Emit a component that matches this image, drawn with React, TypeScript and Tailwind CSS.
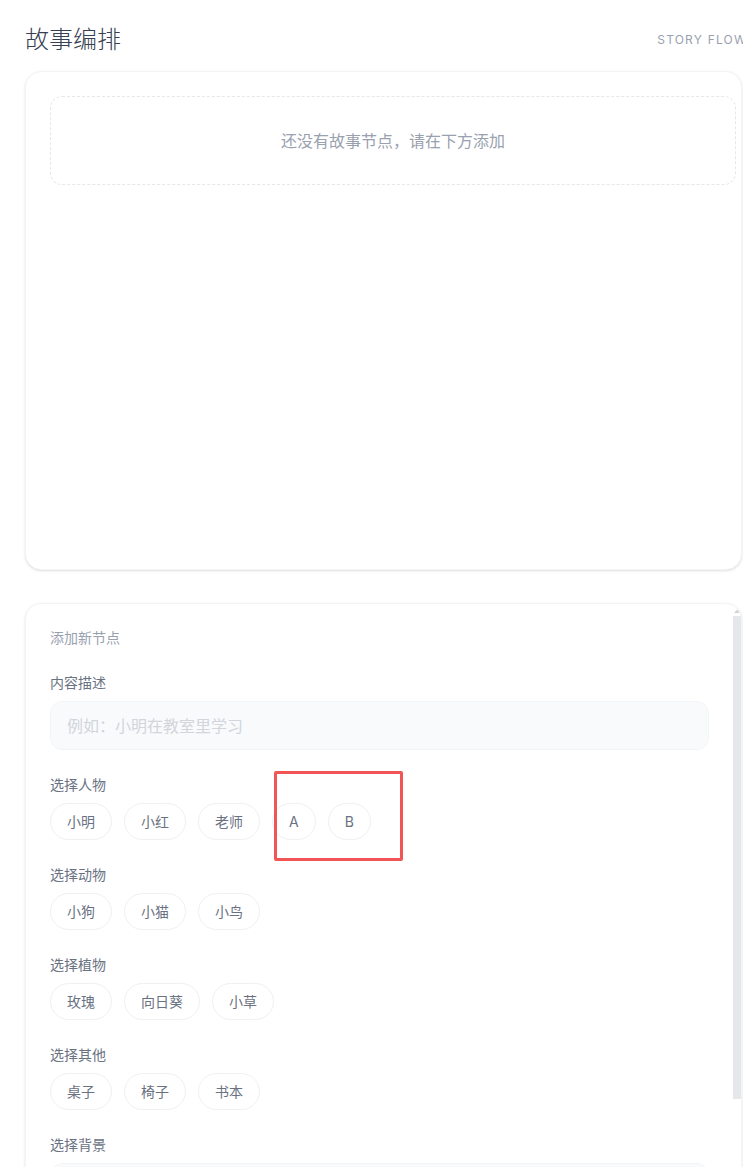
const people = ["小明", "小红", "老师", "A", "B"];
const animals = ["小狗", "小猫", "小鸟"];
const plants = ["玫瑰", "向日葵", "小草"];
const others = ["桌子", "椅子", "书本"];

function Chip({ label }: { label: string }) {
  return (
    <button className="h-[37px] px-4 rounded-full border border-[#eef0f3] bg-white text-sm text-gray-500 flex items-center">
      {label}
    </button>
  );
}

function ChipGroup({ title, items }: { title: string; items: string[] }) {
  return (
    <div>
      <div className="text-sm leading-5 text-gray-500 mb-2">{title}</div>
      <div className="flex flex-wrap gap-3">
        {items.map((item) => (
          <Chip key={item} label={item} />
        ))}
      </div>
    </div>
  );
}

export default function App() {
  return (
    <div
      className="relative w-full min-h-[1167px] overflow-hidden bg-white"
      style={{ fontFamily: 'Inter, "Noto Sans CJK SC", sans-serif' }}
    >
      <div className="ml-[25px] w-[722px] pt-6">
        <div className="flex items-center justify-between h-8">
          <h1 className="text-2xl text-gray-700 font-light">故事编排</h1>
          <span className="text-xs tracking-widest text-gray-400">STORY FLOW</span>
        </div>

        {/* story nodes */}
        <div className="mt-[15px] w-[717px] h-[499px] rounded-2xl border border-gray-100 shadow-sm bg-white pl-6 pr-[5px] pt-6">
          <div className="h-[89px] rounded-xl border border-dashed border-gray-200 flex items-center justify-center text-base text-gray-400">
            还没有故事节点，请在下方添加
          </div>
        </div>

        {/* add node form */}
        <div className="relative mt-[33px] w-[717px] h-[600px] rounded-2xl border border-gray-100 shadow-sm bg-white overflow-hidden">
          <div className="h-full overflow-y-auto [scrollbar-width:none]">
            <div className="pl-6 pr-8 py-6 flex flex-col gap-[25px]">
              <div className="text-sm leading-5 text-gray-400">添加新节点</div>

              <div>
                <div className="text-sm leading-5 text-gray-500 mb-2">内容描述</div>
                <input
                  className="w-full h-[49px] px-4 rounded-xl bg-gray-50 border border-gray-100 text-base text-gray-700 placeholder:text-gray-300 outline-none"
                  placeholder="例如：小明在教室里学习"
                />
              </div>

              <ChipGroup title="选择人物" items={people} />
              <ChipGroup title="选择动物" items={animals} />
              <ChipGroup title="选择植物" items={plants} />
              <ChipGroup title="选择其他" items={others} />

              <div>
                <div className="text-sm leading-5 text-gray-500 mb-2">选择背景</div>
                <div className="w-full h-[49px] px-4 rounded-xl bg-gray-50 border border-gray-100 text-base text-gray-400 flex items-center">
                  教室
                </div>
              </div>

              <button className="h-12 rounded-xl bg-gray-800 text-white text-sm">添加节点</button>
            </div>
          </div>

          {/* scrollbar */}
          <div className="absolute right-0 top-0 bottom-0 w-[8px] flex flex-col items-center pointer-events-none">
            <svg width="8" height="8" viewBox="0 0 8 8" className="mt-[3px]">
              <path d="M1 6 L4 2.5 L7 6 Z" fill="#d1d5db" />
            </svg>
            <div className="mt-[1px] w-[8px] h-[483px] bg-[#e5e7eb]" />
          </div>
        </div>
      </div>

      {/* annotation box */}
      <div className="absolute left-[274px] top-[771px] w-[129px] h-[90px] border-[3px] border-[#f25555] rounded-[2px] pointer-events-none" />
    </div>
  );
}
